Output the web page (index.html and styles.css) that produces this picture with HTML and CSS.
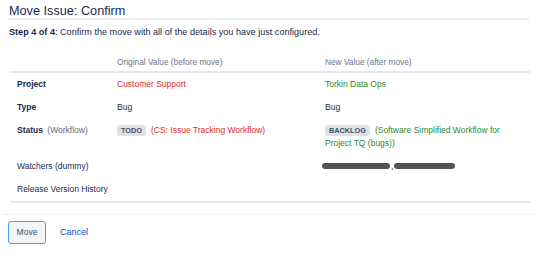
FILE: index.html
```html
<!DOCTYPE html>
<html lang="en">

<head>
  <meta charset="UTF-8">
  <title>Move Issue: Confirm</title>
  <link rel="stylesheet" href="styles.css">
</head>

<body>
  <div class="page">
    <h2 class="title">Move Issue: Confirm</h2>
    <p class="step"><b>Step 4 of 4</b>: Confirm the move with all of the details you have just configured.</p>

    <table class="compare">
      <tr>
        <th class="label"></th>
        <th class="old">Original Value (before move)</th>
        <th class="new">New Value (after move)</th>
      </tr>
      <tr>
        <td class="label"><b>Project</b></td>
        <td class="removed">Customer Support</td>
        <td class="added">Torkin Data Ops</td>
      </tr>
      <tr>
        <td class="label"><b>Type</b></td>
        <td>Bug</td>
        <td>Bug</td>
      </tr>
      <tr>
        <td class="label"><b>Status</b> <span class="hint">(Workflow)</span></td>
        <td><span class="lozenge">TODO</span><span class="removed">(CS: Issue Tracking Workflow)</span></td>
        <td><span class="lozenge">BACKLOG</span><span class="added">(Software Simplified Workflow for Project TQ (bugs))</span></td>
      </tr>
      <tr>
        <td class="label">Watchers (dummy)</td>
        <td></td>
        <td><span class="blot one"></span>,<span class="blot two"></span></td>
      </tr>
      <tr>
        <td class="label">Release Version History</td>
        <td></td>
        <td></td>
      </tr>
    </table>
  </div>

  <div class="footer">
    <button class="btn">Move</button>
    <a class="cancel" href="#">Cancel</a>
  </div>
</body>

</html>
```

FILE: styles.css
```css
body {
  margin: 0;
  font-family: 'Liberation Sans', Arial, sans-serif;
  font-size: 8.5px;
  color: #172b4d;
}

.page {
  padding-left: 9px;
  width: 520px;
}

.title {
  margin: 0;
  padding-top: 5px;
  font-size: 12.7px;
  line-height: 13px;
  font-weight: normal;
  color: #172b4d;
  border-bottom: 2px solid #ebecf0;
}

.step {
  margin: 5px 0 0;
  font-size: 9.1px;
  line-height: 14px;
}

.compare {
  margin-top: 16px;
  margin-left: 1px;
  width: 520px;
  border-collapse: collapse;
  table-layout: fixed;
  border-bottom: 2px solid #e6e8ec;
}

th {
  text-align: left;
  font-weight: normal;
  font-size: 8.3px;
  color: #6b778c;
  line-height: 14px;
  padding: 0 0 1.5px;
  border-bottom: 2px solid #e6e8ec;
}

td {
  padding: 5px 0;
  line-height: 13px;
  vertical-align: top;
}

td:last-child {
  padding-right: 14px;
}

.label {
  width: 100px;
  padding-left: 7px;
}

.old {
  width: 208px;
}

.hint {
  margin-left: 2px;
  color: #5e6c84;
}

.removed {
  color: #de2a2a;
}

.added {
  color: #2b8a2b;
}

.lozenge {
  display: inline-block;
  vertical-align: top;
  margin: 1px 5px 0 0;
  padding: 0 4px;
  height: 11px;
  line-height: 11px;
  font-size: 7.3px;
  font-weight: bold;
  color: #42526e;
  background: #dfe1e6;
  border-radius: 3px;
}

.blot {
  display: inline-block;
  vertical-align: middle;
  height: 6px;
  background: #545454;
  border-radius: 3px;
}

.one {
  width: 68px;
  margin-left: -3px;
  margin-right: 1px;
}

.two {
  width: 61px;
  margin-left: 1px;
}

.footer {
  margin: 11px 0 0 2px;
  width: 531px;
  border-top: 1.5px solid #ebecf0;
  padding: 6px 0 0 6px;
  display: flex;
  align-items: center;
}

.btn {
  width: 38px;
  height: 23px;
  padding: 0;
  font-family: inherit;
  font-size: 8.5px;
  color: #42526e;
  background: #f4f5f7;
  border: 1.5px solid #4c9aff;
  border-radius: 3px;
}

.cancel {
  margin-left: 14px;
  color: #0052cc;
  font-size: 9px;
  text-decoration: none;
}
```
